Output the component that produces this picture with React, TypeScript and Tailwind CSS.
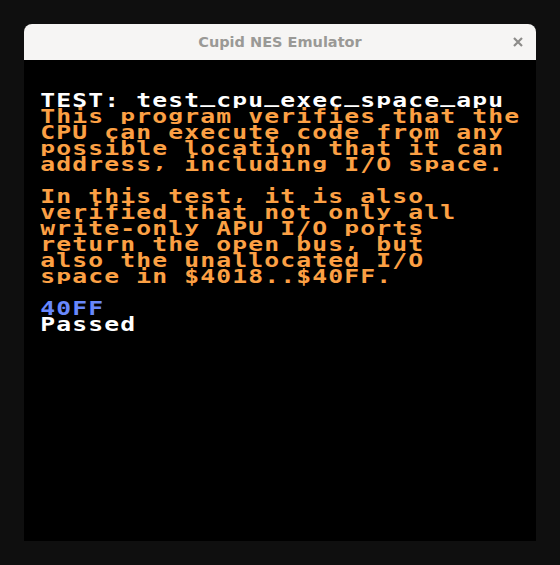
import React from "react";

const W = "text-white";
const O = "text-[#fca044]";
const B = "text-[#6888fc]";

const lines: [string, string][] = [
  ["TEST: test_cpu_exec_space_apu", W],
  ["This program verifies that the", O],
  ["CPU can execute code from any", O],
  ["possible location that it can", O],
  ["address, including I/O space.", O],
  ["", O],
  ["In this test, it is also", O],
  ["verified that not only all", O],
  ["write-only APU I/O ports", O],
  ["return the open bus, but", O],
  ["also the unallocated I/O", O],
  ["space in $4018..$40FF.", O],
  ["", O],
  ["40FF", B],
  ["Passed", W],
];

const DESC = "gpqyj,;";

function Cell({ ch }: { ch: string }) {
  if (ch === " ") return <span className="w-4 h-4 shrink-0" />;
  let cls = "inline-block scale-x-[1.3] origin-center leading-4";
  if (ch === "_") cls = "inline-block scale-x-[1.3] -translate-y-[5px] leading-4";
  else if (DESC.includes(ch)) cls = "inline-block scale-x-[1.3] scale-y-[0.86] origin-top leading-4";
  return (
    <span className="w-4 h-4 shrink-0 flex justify-center">
      <span className={cls}>{ch}</span>
    </span>
  );
}

function Line({ text, color }: { text: string; color: string }) {
  return (
    <div className={`flex h-4 ${color}`}>
      {text.split("").map((ch, i) => (
        <Cell key={i} ch={ch} />
      ))}
    </div>
  );
}

export default function App() {
  return (
    <div className="w-[560px] h-[565px] bg-[#0f0f0f] p-6">
      <div className="flex flex-col h-full rounded-t-lg overflow-hidden">
        <div className="h-9 bg-[#f6f5f4] grid grid-cols-[1fr_auto_1fr] items-center">
          <div />
          <div
            className="text-[14.5px] font-bold text-[#9a9996] leading-none"
            style={{ fontFamily: '"DejaVu Sans", sans-serif' }}
          >
            Cupid NES Emulator
          </div>
          <div className="flex justify-end pr-[13px]">
            <svg width="10" height="10" viewBox="0 0 10 10">
              <path d="M1 1 L9 9 M9 1 L1 9" stroke="#8d8c8a" strokeWidth="2.2" />
            </svg>
          </div>
        </div>
        <div
          className="flex-1 bg-black pt-8 pl-4 text-[19px] font-bold leading-4 whitespace-pre"
          style={{ fontFamily: '"DejaVu Sans Mono", monospace' }}
        >
          {lines.map(([t, c], i) => (
            <Line key={i} text={t} color={c} />
          ))}
        </div>
      </div>
    </div>
  );
}
